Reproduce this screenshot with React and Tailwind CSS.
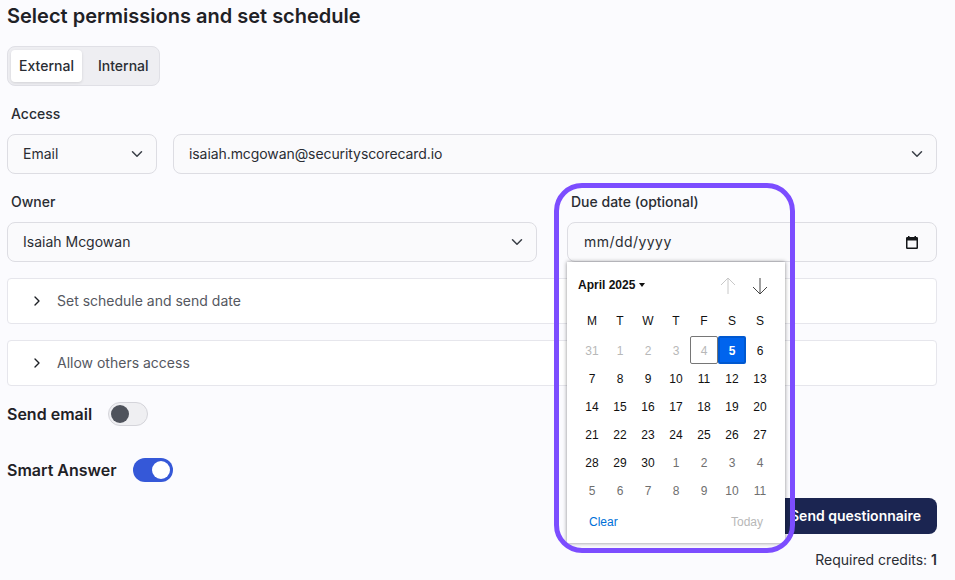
import { ChevronDown, ChevronRight } from 'lucide-react';

const WEEKDAYS = ['M', 'T', 'W', 'T', 'F', 'S', 'S'];

const DAYS = [
  ['31', 'off'], ['1', 'off'], ['2', 'off'], ['3', 'off'], ['4', 'today'], ['5', 'selected'], ['6', 'cur'],
  ['7', 'cur'], ['8', 'cur'], ['9', 'cur'], ['10', 'cur'], ['11', 'cur'], ['12', 'cur'], ['13', 'cur'],
  ['14', 'cur'], ['15', 'cur'], ['16', 'cur'], ['17', 'cur'], ['18', 'cur'], ['19', 'cur'], ['20', 'cur'],
  ['21', 'cur'], ['22', 'cur'], ['23', 'cur'], ['24', 'cur'], ['25', 'cur'], ['26', 'cur'], ['27', 'cur'],
  ['28', 'cur'], ['29', 'cur'], ['30', 'cur'], ['1', 'next'], ['2', 'next'], ['3', 'next'], ['4', 'next'],
  ['5', 'next'], ['6', 'next'], ['7', 'next'], ['8', 'next'], ['9', 'next'], ['10', 'next'], ['11', 'next'],
];

const dayClass = {
  off: 'text-[#b8b8b8]',
  today: 'text-[#b8b8b8] border border-[#767676] rounded-[2px]',
  selected: 'bg-[#0064ee] text-white font-bold border-2 border-[#0058d0] rounded-[2px]',
  cur: 'text-[#111111]',
  next: 'text-[#6f6f6f]',
};

const FieldBox = ({ className, children }) => (
  <div className={`flex h-10 items-center justify-between rounded-lg border border-[#dddde3] bg-[#fafafc] pl-[15px] text-sm text-[#2a2d33] ${className}`}>
    {children}
  </div>
);

const Accordion = ({ label }) => (
  <div className="flex h-[46px] items-center gap-3 rounded-[4px] border border-[#e6e6ec] bg-white pl-[21px] text-sm text-[#55585f]">
    <ChevronRight size={16} strokeWidth={2} className="text-[#1c1f24]" />
    <span>{label}</span>
  </div>
);

const Calendar = () => (
  <div className="absolute left-[567px] top-[262px] h-[281px] w-[218px] bg-white font-['Liberation_Sans',Arial,sans-serif] text-xs shadow-[0_0_4px_rgba(0,0,0,0.45)]">
    <div className="flex h-[45px] items-center justify-between pl-[11px] pr-[17px]">
      <div className="flex items-center gap-[4px] font-bold text-[#111111]">
        April 2025
        <span className="h-0 w-0 border-x-[3.5px] border-t-[4px] border-x-transparent border-t-[#111111]" />
      </div>
      <div className="mt-[3px] flex items-center gap-4">
        <svg width="16" height="18" viewBox="0 0 16 18" fill="none" stroke="#c8c8c8">
          <path d="M8 1v16M1 8l7-7 7 7" />
        </svg>
        <svg width="16" height="18" viewBox="0 0 16 18" fill="none" stroke="#444444">
          <path d="M8 1v16M1 10l7 7 7-7" />
        </svg>
      </div>
    </div>
    <div className="mt-[2px] grid grid-cols-[repeat(7,28px)] justify-center">
      {WEEKDAYS.map((d, i) => (
        <div key={i} className="flex h-6 items-center justify-center text-[#111111]">{d}</div>
      ))}
    </div>
    <div className="mt-[3px] grid grid-cols-[repeat(7,28px)] auto-rows-[28px] justify-center">
      {DAYS.map(([n, kind], i) => (
        <div key={i} className={`flex items-center justify-center pt-[2px] ${dayClass[kind]}`}>{n}</div>
      ))}
    </div>
    <div className="flex h-[34px] items-center justify-between px-[22px] pt-[2px]">
      <span className="text-[#0070d8]">Clear</span>
      <span className="text-[#b8b8b8]">Today</span>
    </div>
  </div>
);

const App = () => {
  return (
    <div className="relative h-[580px] w-[955px] overflow-hidden bg-[#fbfbfe] pl-[7px] pr-[18px] pt-[2px] font-['Inter',sans-serif]">
      <h2 className="text-xl leading-7 font-semibold text-[#1f2126]">Select permissions and set schedule</h2>

      <div className="mt-4 flex h-10 w-[153px] items-center gap-[1px] rounded-lg border border-[#e0e0e6] bg-[#eeeef2] pl-[3px] text-sm font-medium text-[#2a2d33]">
        <div className="flex h-8 w-[71px] items-center justify-center rounded-[4px] bg-white shadow-[0_1px_3px_rgba(0,0,0,0.12)]">External</div>
        <div className="pl-[15px]">Internal</div>
      </div>

      <label className="mt-[18px] block pl-1 text-sm leading-5 font-medium text-[#2a2d33]">Access</label>
      <div className="mt-[10px] flex gap-4">
        <FieldBox className="w-[150px] shrink-0 pr-[10px]">
          Email
          <ChevronDown size={18} className="text-[#3a3f47]" />
        </FieldBox>
        <FieldBox className="flex-1 pr-[10px]">
          <span className="tracking-[-0.08px]">isaiah.mcgowan@securityscorecard.io</span>
          <ChevronDown size={18} className="text-[#3a3f47]" />
        </FieldBox>
      </div>

      <div className="mt-[18px] flex gap-[30px]">
        <div className="w-[530px]">
          <label className="block pl-1 text-sm leading-5 font-medium text-[#2a2d33]">Owner</label>
          <FieldBox className="mt-[10px] pr-[10px]">
            Isaiah Mcgowan
            <ChevronDown size={18} className="text-[#3a3f47]" />
          </FieldBox>
        </div>
        <div className="flex-1">
          <label className="block pl-1 text-sm leading-5 font-medium text-[#2a2d33]">Due date (optional)</label>
          <FieldBox className="mt-[10px] pr-[18px]">
            <span className="pl-[1px] tracking-[0.45px]">mm/dd/yyyy</span>
            <svg width="12" height="13" viewBox="0 0 12 13" fill="none">
              <path d="M2 0h1.5v1h5V0H10v1h.8A1.2 1.2 0 0 1 12 2.2v9.6a1.2 1.2 0 0 1-1.2 1.2H1.2A1.2 1.2 0 0 1 0 11.8V2.2A1.2 1.2 0 0 1 1.2 1H2V0Z M1.5 4.5v7h9v-7h-9Z" fill="#15171a" fillRule="evenodd" />
            </svg>
          </FieldBox>
        </div>
      </div>

      <div className="mt-4 flex flex-col gap-4">
        <Accordion label="Set schedule and send date" />
        <Accordion label="Allow others access" />
      </div>

      <div className="mt-4 flex h-6 items-center gap-4">
        <span className="text-base font-semibold text-[#1f2126]">Send email</span>
        <div className="flex h-6 w-10 items-center rounded-full border border-[#d4d4da] bg-[#efeff2] pl-[2px]">
          <div className="h-[18px] w-[18px] rounded-full bg-[#4f535c]" />
        </div>
      </div>

      <div className="mt-8 flex h-6 items-center gap-4">
        <span className="text-base font-semibold text-[#1f2126]">Smart Answer</span>
        <div className="flex h-6 w-10 items-center justify-end rounded-full bg-[#3558d8] pr-[3px]">
          <div className="h-[18px] w-[18px] rounded-full bg-white" />
        </div>
      </div>

      <div className="mt-4 flex justify-end">
        <button className="h-9 rounded-lg bg-[#1b2551] px-4 text-sm font-semibold text-white">Send questionnaire</button>
      </div>
      <div className="mt-4 text-right text-sm leading-5 text-[#2a2d33]">
        Required credits: <span className="font-semibold">1</span>
      </div>

      <Calendar />
      <div className="pointer-events-none absolute left-[554px] top-[183px] h-[370px] w-[241px] rounded-[28px] border-[5px] border-[#7c4dff]" />
    </div>
  );
};

export default App;
